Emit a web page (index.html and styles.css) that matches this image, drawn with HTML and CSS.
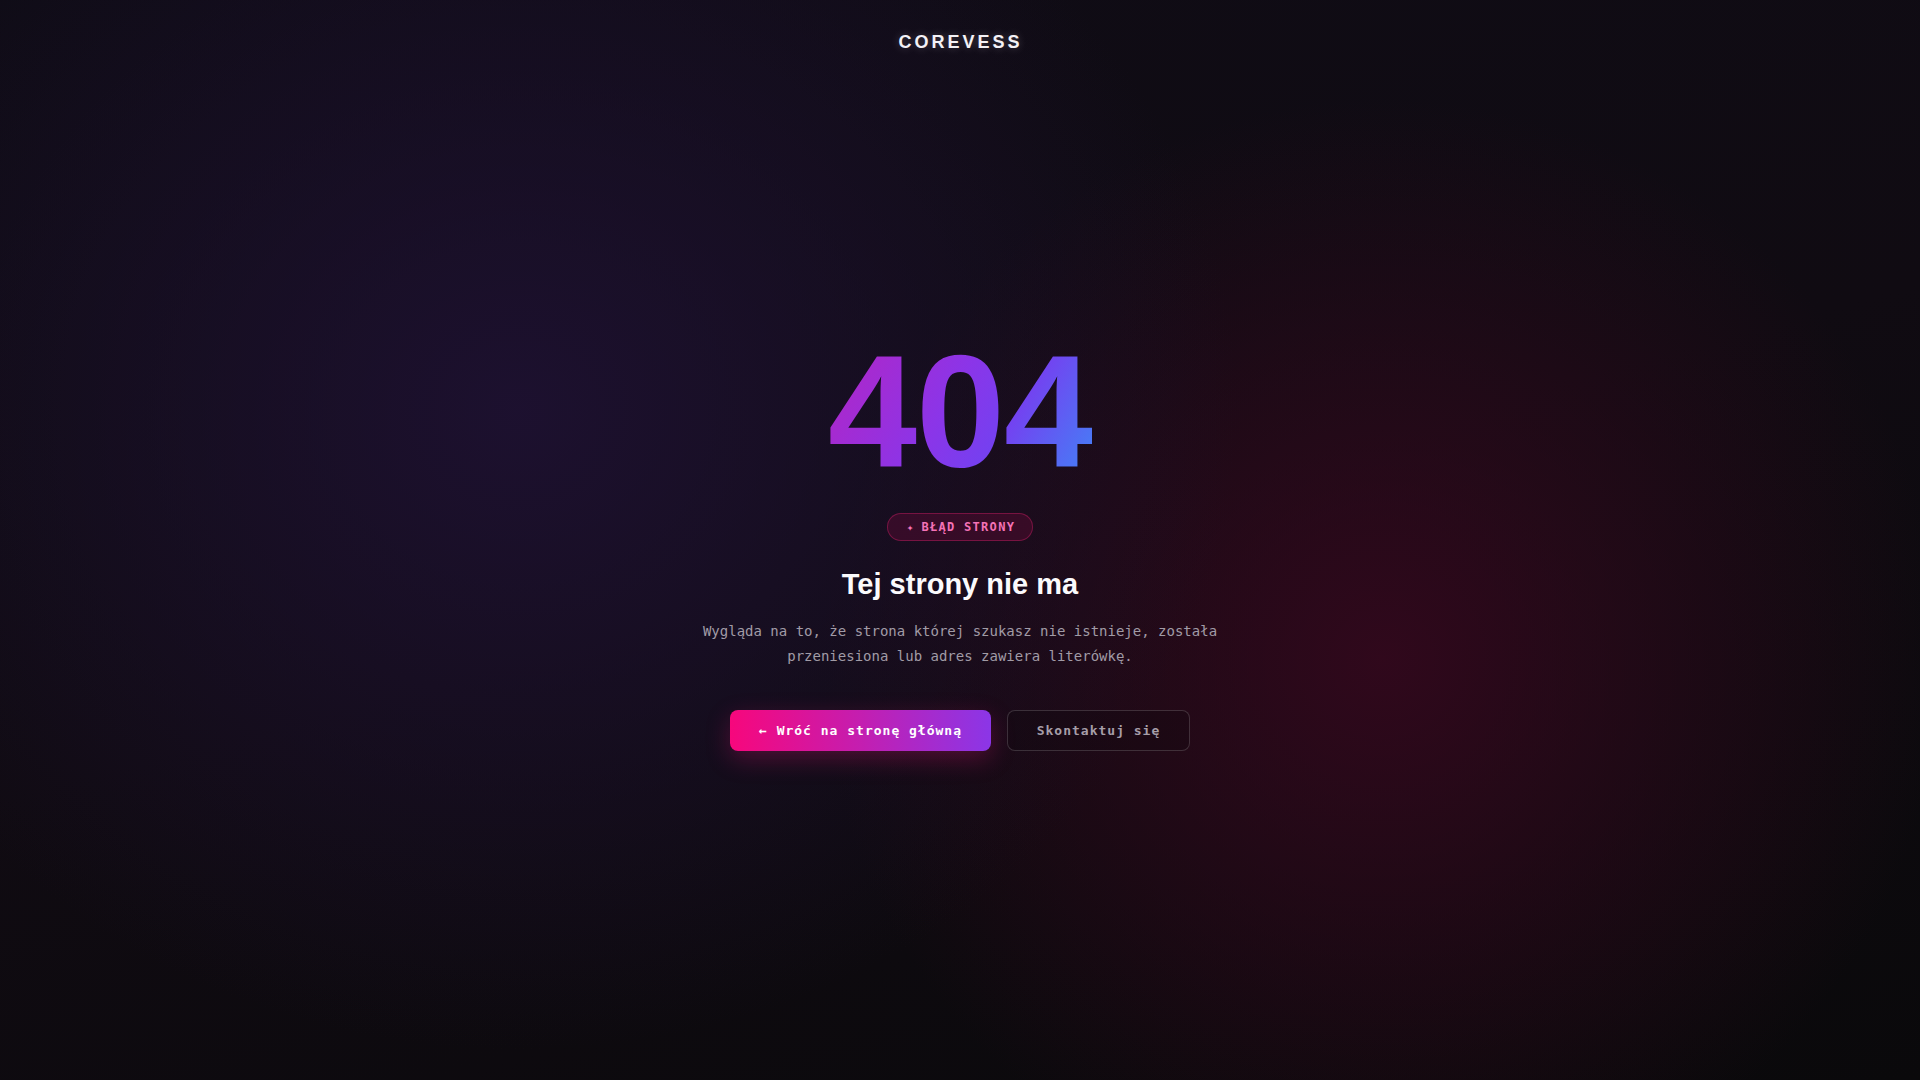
FILE: index.html
```html
<!DOCTYPE html>
<html lang="pl">
<head>
<meta charset="utf-8">
<title>404 — Corevess</title>
<link rel="stylesheet" href="styles.css">
</head>
<body>
<div class="page">
  <header class="header">
    <div class="logo">COREVESS</div>
  </header>
  <main class="main">
    <div class="content">
      <div class="code">404</div>
      <div class="badge"><span class="star">✦</span> BŁĄD STRONY</div>
      <h1 class="title">Tej strony nie ma</h1>
      <p class="desc">Wygląda na to, że strona której szukasz nie istnieje, została przeniesiona lub adres zawiera literówkę.</p>
      <div class="actions">
        <a class="btn btn-primary" href="#">← Wróć na stronę główną</a>
        <a class="btn btn-secondary" href="#">Skontaktuj się</a>
      </div>
    </div>
  </main>
  <footer class="footer"></footer>
</div>
</body>
</html>
```
FILE: styles.css
```css
* { box-sizing: border-box; }
html, body { margin: 0; padding: 0; height: 100%; }
body {
  background:
    radial-gradient(ellipse 720px 640px at 27% 38%, rgba(30, 17, 50, 0.9), rgba(30, 17, 50, 0) 100%),
    radial-gradient(ellipse 560px 560px at 72% 61%, rgba(54, 8, 30, 0.85), rgba(54, 8, 30, 0) 100%),
    linear-gradient(165deg, #0f0c16 0%, #100b12 50%, #0a090b 100%);
  color: #fff;
  font-family: "Liberation Sans", Arial, sans-serif;
}
.page {
  min-height: 100vh;
  display: grid;
  grid-template-rows: 84px 1fr 80px;
}
.header {
  display: flex;
  align-items: center;
  justify-content: center;
}
.logo {
  font-size: 18px;
  line-height: 18px;
  font-weight: 700;
  letter-spacing: 3px;
  padding-left: 1px;
  color: #f4f2f6;
  text-shadow: 0 0 8px rgba(255,255,255,0.25);
}
.main {
  display: flex;
  align-items: center;
  justify-content: center;
}
.content {
  display: flex;
  flex-direction: column;
  align-items: center;
  text-align: center;
}
.code {
  font-size: 160px;
  line-height: 156px;
  font-weight: 700;
  letter-spacing: -1px;
  background: linear-gradient(120deg, #b624c2 0%, #8b35e8 45%, #7540f0 65%, #3f86f7 100%);
  -webkit-background-clip: text;
  background-clip: text;
  color: transparent;
}
.badge {
  margin-top: 24px;
  height: 28px;
  padding: 0 17px 0 19px;
  display: flex;
  align-items: center;
  gap: 8px;
  border-radius: 14px;
  border: 1px solid rgba(200, 30, 100, 0.45);
  background: rgba(90, 10, 50, 0.45);
  color: #f472b6;
  font-family: "DejaVu Sans Mono", monospace;
  font-size: 12px;
  font-weight: 700;
  letter-spacing: 1.3px;
}
.star { font-size: 11px; letter-spacing: 0; }
.title {
  margin: 26px 0 0;
  font-size: 29px;
  line-height: 34px;
  font-weight: 700;
  color: #fbfafc;
}
.desc {
  margin: 18px 0 0;
  max-width: 540px;
  font-family: "DejaVu Sans Mono", monospace;
  font-size: 14px;
  line-height: 25px;
  color: #a19ba6;
}
.actions {
  margin-top: 41px;
  display: flex;
  gap: 16px;
}
.btn {
  height: 41px;
  display: flex;
  align-items: center;
  justify-content: center;
  border-radius: 8px;
  font-family: "DejaVu Sans Mono", monospace;
  font-size: 13px;
  font-weight: 700;
  letter-spacing: 1px;
  text-decoration: none;
}
.btn-primary {
  width: 261px;
  color: #fff;
  background: linear-gradient(90deg, #f7077c 0%, #c41eb0 50%, #8b36e7 100%);
  box-shadow: 0 8px 24px rgba(230, 20, 120, 0.28);
}
.btn-secondary {
  width: 183px;
  color: #a69ea8;
  border: 1px solid rgba(255, 255, 255, 0.16);
  background: rgba(10, 6, 10, 0.25);
}
```
